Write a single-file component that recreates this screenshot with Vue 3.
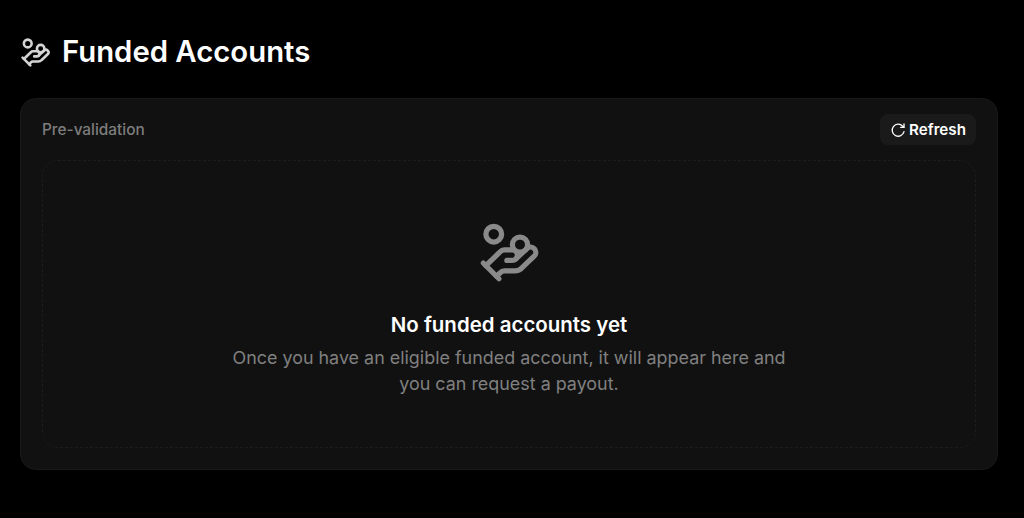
<template>
  <div class="page">
    <header class="page-header">
      <svg class="title-icon" viewBox="0 0 24 24" fill="none" stroke="currentColor" stroke-width="2" stroke-linecap="round" stroke-linejoin="round">
        <path d="M11 15h2a2 2 0 1 0 0-4h-3c-.6 0-1.1.2-1.4.6L3 17" />
        <path d="m7 21 1.6-1.4c.3-.4.8-.6 1.4-.6h4c1.1 0 2.1-.4 2.8-1.2l4.6-4.4a2 2 0 0 0-2.75-2.91l-4.2 3.9" />
        <path d="m2 16 6 6" />
        <circle cx="16" cy="9" r="2.9" />
        <circle cx="6" cy="5" r="3" />
      </svg>
      <h1>Funded Accounts</h1>
    </header>

    <section class="card">
      <div class="card-top">
        <span class="label">Pre-validation</span>
        <button class="refresh" type="button">
          <svg class="refresh-icon" viewBox="0 0 24 24" fill="none" stroke="currentColor" stroke-width="2" stroke-linecap="round" stroke-linejoin="round">
            <path d="M21 14.5A9 9 0 1 1 19 6.3L21 8" />
            <path d="M21 3v5h-5" />
          </svg>
          Refresh
        </button>
      </div>

      <div class="empty">
        <svg class="empty-icon" viewBox="0 0 24 24" fill="none" stroke="currentColor" stroke-width="2" stroke-linecap="round" stroke-linejoin="round">
          <path d="M11 15h2a2 2 0 1 0 0-4h-3c-.6 0-1.1.2-1.4.6L3 17" />
          <path d="m7 21 1.6-1.4c.3-.4.8-.6 1.4-.6h4c1.1 0 2.1-.4 2.8-1.2l4.6-4.4a2 2 0 0 0-2.75-2.91l-4.2 3.9" />
          <path d="m2 16 6 6" />
          <circle cx="16" cy="9" r="2.9" />
          <circle cx="6" cy="5" r="3" />
        </svg>
        <h2>No funded accounts yet</h2>
        <p>Once you have an eligible funded account, it will appear here and you can request a payout.</p>
      </div>
    </section>
  </div>
</template>

<script setup>
</script>

<style>
html,
body {
  background: #000;
}
</style>

<style scoped>
.page {
  min-height: 518px;
  box-sizing: border-box;
  padding: 36px 26px 0 20px;
  background: #000;
  color: #fff;
  font-family: Inter, "Liberation Sans", sans-serif;
}

.page-header {
  display: flex;
  align-items: center;
  gap: 11px;
  height: 32px;
  margin-bottom: 30px;
}

.page-header h1 {
  margin: 0;
  font-size: 29.3px;
  font-weight: 600;
  line-height: 32px;
}

.title-icon {
  width: 31px;
  height: 31px;
  color: #d4d4d4;
}

.card {
  box-sizing: border-box;
  height: 372px;
  padding: 15px 21px 21px;
  background: #111;
  border: 1px solid #191919;
  border-radius: 16px;
}

.card-top {
  display: flex;
  align-items: center;
  justify-content: space-between;
  height: 31px;
  margin-bottom: 15px;
}

.label {
  font-size: 15.36px;
  font-weight: 500;
  color: #7d7d7d;
}

.refresh {
  display: flex;
  align-items: center;
  gap: 3px;
  height: 31px;
  padding: 0 10px;
  background: #1a1a1a;
  border: 0;
  border-radius: 8px;
  color: #fff;
  font-family: inherit;
  font-size: 15.2px;
  font-weight: 600;
}

.refresh-icon {
  width: 16px;
  height: 16px;
}

.empty {
  box-sizing: border-box;
  height: 288px;
  display: flex;
  flex-direction: column;
  align-items: center;
  padding-top: 60px;
  border: 1px dashed #1c1c1c;
  border-radius: 16px;
}

.empty-icon {
  width: 63px;
  height: 63px;
  color: #8a8a8a;
  margin-bottom: 27px;
}

.empty h2 {
  margin: 0 0 6px;
  font-size: 20.48px;
  font-weight: 600;
  line-height: 28px;
}

.empty p {
  margin: 0;
  width: 576px;
  text-align: center;
  font-size: 17.92px;
  line-height: 26px;
  color: #808080;
}
</style>
